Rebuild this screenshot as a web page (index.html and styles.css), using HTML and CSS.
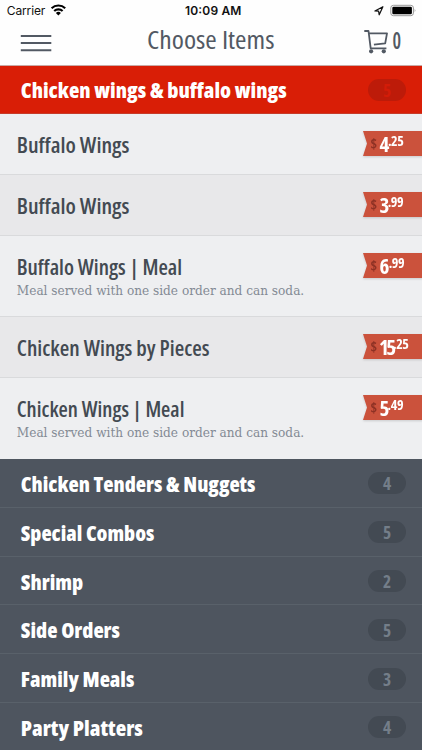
FILE: index.html
```html
<!DOCTYPE html>
<html lang="en">
<head>
<meta charset="utf-8">
<title>Choose Items</title>
<link rel="stylesheet" href="styles.css">
</head>
<body>
<header class="top">
  <div class="status">
    <svg width="422" height="22">
      <text class="carrier" x="6.8" y="15.2" textLength="38.5">Carrier</text>
      <g class="wifi"><path d="M51.6 8.3a9.7 9.7 0 0 1 13.6 0M54.2 11.1a6 6 0 0 1 8.4 0"/><path class="dot" d="M58.4 15.5l-2.5-2.6a3.6 3.6 0 0 1 5 0z"/></g>
      <text class="clock" x="185" y="15.2" textLength="56.4">10:09 AM</text>
      <path class="location" d="M374.9 11l8-4.3-3.7 8.1-.6-3.6z"/>
      <rect class="battery" x="390.8" y="5.3" width="22.6" height="10.4" rx="2.6"/>
      <rect x="392.3" y="6.8" width="19.6" height="7.4" rx="1.2"/>
      <path class="tip" d="M414.7 8.7q1.6 1.8 0 3.6z"/>
    </svg>
  </div>
  <nav class="bar">
    <svg width="422" height="43">
      <path class="burger" d="M20.8 13.9h30.5M20.8 21h30.5M20.8 28.2h30.5"/>
      <text class="title" x="147" y="27.3" textLength="127.5" lengthAdjust="spacingAndGlyphs">Choose Items</text>
      <g class="cart"><path d="M364.3 9h4.2l2.2 17.3h15.7M369 11.3h18l-1.8 10-11.3 1.4"/><circle cx="371.1" cy="29.3" r="2.1"/><circle cx="383.8" cy="29.3" r="2.1"/></g>
      <text class="cart-count" x="392.4" y="27" textLength="8.6" lengthAdjust="spacingAndGlyphs">0</text>
    </svg>
  </nav>
</header>
<main>
  <div class="category active"><svg class="label"><text x="20.8" y="32.3" textLength="265.8" lengthAdjust="spacingAndGlyphs">Chicken wings &amp; buffalo wings</text></svg><span class="count"><b>5</b></span></div>
  <section class="items">
    <div class="item"><svg class="label"><text x="16.8" y="38.6" textLength="112.6" lengthAdjust="spacingAndGlyphs">Buffalo Wings</text></svg>
      <svg class="tag"><path d="M0 0h60v25H0l4-12.5z"/><text class="dollar" x="7.5" y="18">$</text><text class="whole" x="16.6" y="20.6">4<tspan class="cents" x="24.9" y="15.2">.25</tspan></text></svg></div>
    <div class="item alt"><svg class="label"><text x="16.8" y="38.6" textLength="112.6" lengthAdjust="spacingAndGlyphs">Buffalo Wings</text></svg>
      <svg class="tag"><path d="M0 0h60v25H0l4-12.5z"/><text class="dollar" x="7.5" y="18">$</text><text class="whole" x="16.6" y="20.6">3<tspan class="cents" x="24.7" y="15.2">.99</tspan></text></svg></div>
    <div class="item tall"><svg class="label"><text x="16.8" y="38.6" textLength="165.3" lengthAdjust="spacingAndGlyphs">Buffalo Wings | Meal</text><text class="note" x="16.8" y="59.3" textLength="287.4" lengthAdjust="spacingAndGlyphs">Meal served with one side order and can soda.</text></svg>
      <svg class="tag"><path d="M0 0h60v25H0l4-12.5z"/><text class="dollar" x="7.5" y="18">$</text><text class="whole" x="16.6" y="20.6">6<tspan class="cents" x="25.7" y="15.2">.99</tspan></text></svg></div>
    <div class="item alt"><svg class="label"><text x="16.8" y="38.6" textLength="192.8" lengthAdjust="spacingAndGlyphs">Chicken Wings by Pieces</text></svg>
      <svg class="tag"><path d="M0 0h60v25H0l4-12.5z"/><text class="dollar" x="7.5" y="18">$</text><text class="whole pair" x="16" y="20.6">15<tspan class="cents" x="30" y="15.2">.25</tspan></text></svg></div>
    <div class="item tall"><svg class="label"><text x="16.8" y="38.6" textLength="167.6" lengthAdjust="spacingAndGlyphs">Chicken Wings | Meal</text><text class="note" x="16.8" y="59.3" textLength="287.4" lengthAdjust="spacingAndGlyphs">Meal served with one side order and can soda.</text></svg>
      <svg class="tag"><path d="M0 0h60v25H0l4-12.5z"/><text class="dollar" x="7.5" y="18">$</text><text class="whole" x="16.6" y="20.6">5<tspan class="cents" x="24.6" y="15.2">.49</tspan></text></svg></div>
  </section>
  <div class="category"><svg class="label"><text x="20.8" y="32.5" textLength="234.7" lengthAdjust="spacingAndGlyphs">Chicken Tenders &amp; Nuggets</text></svg><span class="count"><b>4</b></span></div>
  <div class="category"><svg class="label"><text x="20.8" y="32.5" textLength="133.6" lengthAdjust="spacingAndGlyphs">Special Combos</text></svg><span class="count"><b>5</b></span></div>
  <div class="category"><svg class="label"><text x="20.8" y="32.5" textLength="62.4" lengthAdjust="spacingAndGlyphs">Shrimp</text></svg><span class="count"><b>2</b></span></div>
  <div class="category"><svg class="label"><text x="20.8" y="32.5" textLength="99.2" lengthAdjust="spacingAndGlyphs">Side Orders</text></svg><span class="count"><b>5</b></span></div>
  <div class="category"><svg class="label"><text x="20.8" y="32.5" textLength="113.5" lengthAdjust="spacingAndGlyphs">Family Meals</text></svg><span class="count"><b>3</b></span></div>
  <div class="category"><svg class="label"><text x="20.8" y="32.5" textLength="122" lengthAdjust="spacingAndGlyphs">Party Platters</text></svg><span class="count"><b>4</b></span></div>
</main>
</body>
</html>
```
FILE: styles.css
```css
* { box-sizing: border-box; }
body { margin: 0; width: 422px; height: 750px; overflow: hidden; background: #4e555f; font-family: "Open Sans", "Noto Sans", sans-serif; font-stretch: 75%; }
svg { display: block; }
.top { height: 65.5px; background: #fefefe; border-bottom: 1px solid #c9aaa6; }
.status { height: 22px; }
.carrier, .clock { font: 12px Inter, sans-serif; fill: #111; }
.clock { font-weight: 600; }
.wifi path { fill: none; stroke: #000; stroke-width: 2.1; }
.wifi .dot { fill: #000; stroke: none; }
.location { fill: none; stroke: #111; stroke-width: 1.2; stroke-linejoin: round; }
.battery { fill: none; stroke: #999; stroke-width: 1; }
.tip { fill: #999; }
.burger { stroke: #525963; stroke-width: 2; }
.title { font-size: 26.3px; font-weight: 400; fill: #525963; }
.cart path { fill: none; stroke: #525963; stroke-width: 1.8; stroke-linejoin: round; }
.cart circle { fill: #525963; }
.cart-count { font-size: 23px; font-weight: 600; fill: #525963; }
.category { height: 48.8px; display: flex; align-items: flex-start; justify-content: space-between; padding-right: 15.7px; border-bottom: 1px solid #59616a; background: #4e555f; }
.label { flex: none; width: 350px; height: 100%; overflow: visible; }
.category text { font-size: 20.7px; font-weight: 800; fill: #fff; }
.count { display: flex; align-items: center; justify-content: center; width: 38.6px; height: 22px; margin-top: 13.4px; border-radius: 11px; background: #434a53; color: #747e89; font-size: 17.5px; line-height: 22px; }
.active { background: #d91e06; border-bottom-color: #c63b29; }
.active .count { background: #bd1b09; color: #d31c08; }
.items { height: 344.7px; }
.item { display: flex; align-items: flex-start; justify-content: space-between; height: 61px; background: #eeeff1; border-bottom: 1px solid #d9dadc; }
.item.alt { background: #e8e8ea; }
.item.tall { height: 81px; }
.item:last-child { height: 80.7px; border: 0; }
.item .label text { font-size: 21.6px; font-weight: 600; fill: #434a52; }
.item .label .note { font: 13.4px "DejaVu Serif Condensed", "DejaVu Serif", serif; font-stretch: 75%; fill: #838a94; }
.tag { flex: none; width: 59.3px; height: 25px; margin-top: 17.2px; overflow: visible; filter: drop-shadow(0 1px 1px rgba(0,0,0,.15)); }
.tag path { fill: #cb523c; }
.tag text { font-weight: 700; fill: #fff; }
.tag .dollar { font-size: 14px; fill: #8d3124; }
.tag .whole { font-size: 21px; letter-spacing: -.8px; }
.tag .pair { letter-spacing: -2.6px; }
.tag .cents { font-size: 14px; letter-spacing: -.4px; }
```
